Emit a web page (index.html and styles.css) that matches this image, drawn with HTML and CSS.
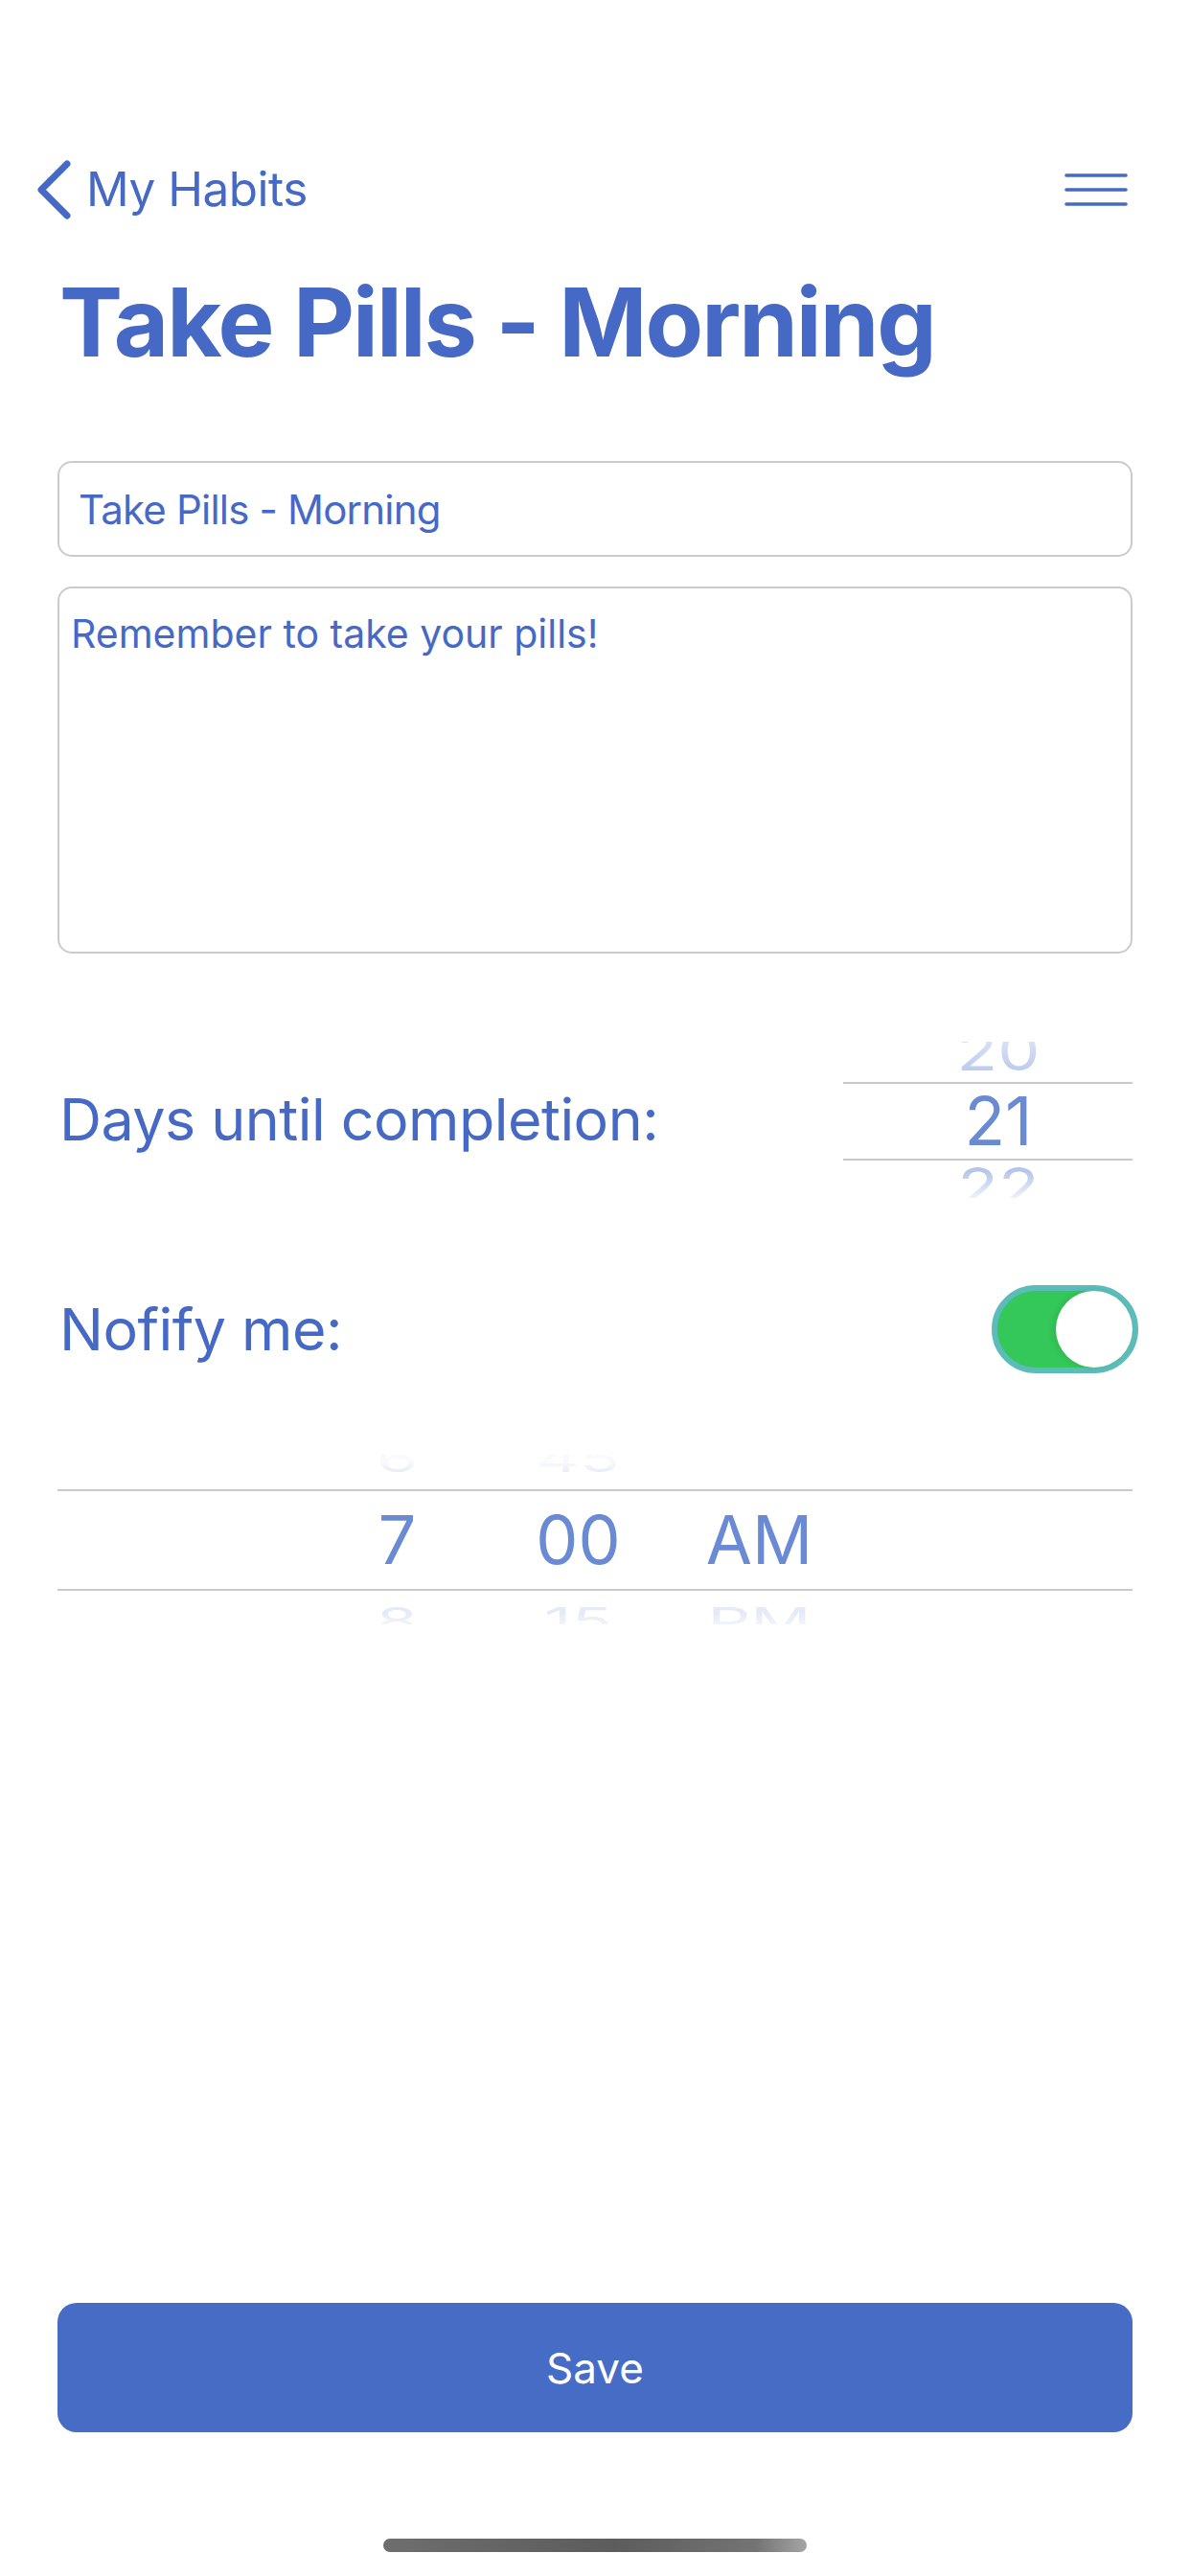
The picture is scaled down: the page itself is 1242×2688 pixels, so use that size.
FILE: index.html
```html
<!DOCTYPE html>
<html lang="en">
<head>
<meta charset="utf-8">
<title>Take Pills - Morning</title>
<link rel="stylesheet" href="styles.css">
</head>
<body>
<div class="screen">
  <header class="nav">
    <a class="back" href="#">
      <svg class="chev" viewBox="0 0 38 62" aria-hidden="true"><path d="M32 4 L5 31 L32 58" fill="none" stroke="#4669c6" stroke-width="7" stroke-linecap="round" stroke-linejoin="round"/></svg>
      <span>My Habits</span>
    </a>
    <svg class="menu" viewBox="0 0 66 34" aria-hidden="true"><g stroke="#4669c6" stroke-width="3.6" stroke-linecap="round"><line x1="2" y1="2" x2="64" y2="2"/><line x1="2" y1="17" x2="64" y2="17"/><line x1="2" y1="32" x2="64" y2="32"/></g></svg>
  </header>

  <h1 class="title">Take Pills - Morning</h1>

  <input class="field" type="text" value="Take Pills - Morning">
  <textarea class="note">Remember to take your pills!</textarea>

  <div class="row days">
    <span class="label">Days until completion:</span>
    <div class="wheel">
      <div class="wheel-prev"><span>20</span></div>
      <div class="wheel-sel"><span>21</span></div>
      <div class="wheel-next"><span>22</span></div>
    </div>
  </div>

  <div class="row notify">
    <span class="label">Nofify me:</span>
    <div class="switch"><div class="knob"></div></div>
  </div>

  <div class="timepicker">
    <div class="tp-row tp-prev"><span>6</span><span>45</span><span></span></div>
    <div class="tp-row tp-sel"><span>7</span><span>00</span><span>AM</span></div>
    <div class="tp-row tp-next"><span>8</span><span>15</span><span>PM</span></div>
  </div>

  <button class="save" type="button">Save</button>
  <div class="home-indicator"></div>
</div>
</body>
</html>
```

FILE: styles.css
```css
* { box-sizing: border-box; }
html, body { margin: 0; padding: 0; background: #ffffff; }
body {
  font-family: Inter, "Liberation Sans", "Noto Sans", sans-serif;
  color: #4669c6;
}
.screen {
  min-height: 2688px;
  display: flex;
  flex-direction: column;
  padding: 0 62px;
}

/* nav */
.nav {
  display: flex;
  align-items: center;
  justify-content: space-between;
  height: 62px;
  margin: 167px 3px 0 -24px;
}
.back {
  display: flex;
  align-items: center;
  gap: 14px;
  color: #4669c6;
  text-decoration: none;
}
.chev { width: 38px; height: 62px; display: block; }
.back span { font-size: 49.5px; line-height: 1; letter-spacing: -0.5px; }
.menu { width: 66px; height: 34px; display: block; }

/* title */
.title {
  margin: 47px 0 0;
  font-size: 99px;
  line-height: 120px;
  font-weight: 700;
  letter-spacing: -2px;
  color: #4669c6;
}

/* fields */
.field {
  display: block;
  height: 100px;
  margin: 85px -2px 0;
  border: 2px solid #cbcbcb;
  border-radius: 15px;
  padding: 0 20px;
  font-family: Inter, "Liberation Sans", sans-serif;
  font-size: 42px;
  letter-spacing: -0.8px;
  line-height: 1;
  color: #4669c6;
  background: #fff;
  outline: none;
}
.note {
  display: block;
  height: 383px;
  margin: 31px -2px 0;
  border: 2px solid #cbcbcb;
  border-radius: 15px;
  padding: 23px 12px;
  font-family: Inter, "Liberation Sans", sans-serif;
  font-size: 41px;
  line-height: 1.2;
  color: #4669c6;
  background: #fff;
  resize: none;
  outline: none;
  overflow: hidden;
}

/* rows */
.row {
  display: flex;
  justify-content: space-between;
  align-items: center;
}
.label { font-size: 61px; line-height: 1; letter-spacing: -0.55px; }
.days { margin-top: 92px; }
.notify { margin-top: 91px; }

/* number wheel */
.wheel { width: 302px; margin-right: -2px; display: flex; flex-direction: column; }
.wheel span { font-size: 70px; line-height: 1; display: block; }
.wheel-prev, .wheel-sel, .wheel-next {
  display: flex;
  justify-content: center;
  padding-left: 22px;
}
.wheel-prev { height: 42px; overflow: hidden; align-items: flex-end; }
.wheel-prev span {
  color: #b6c5eb;
  transform: scaleY(0.8);
  transform-origin: bottom;
  margin-bottom: 4px;
  -webkit-mask-image: linear-gradient(to bottom, rgba(0,0,0,0.3), #000);
  mask-image: linear-gradient(to bottom, rgba(0,0,0,0.3), #000);
}
.wheel-sel {
  height: 82px;
  align-items: center;
  border-top: 2px solid #c9c9c9;
  border-bottom: 2px solid #c9c9c9;
}
.wheel-sel span { color: #6a8ad4; }
.wheel-next { height: 39px; overflow: hidden; align-items: flex-start; }
.wheel-next span {
  color: #b6c5eb;
  transform: scaleY(0.8);
  transform-origin: top;
  -webkit-mask-image: linear-gradient(to bottom, #000 20%, rgba(0,0,0,0) 85%);
  mask-image: linear-gradient(to bottom, #000 20%, rgba(0,0,0,0) 85%);
}

/* switch */
.switch {
  width: 153px;
  height: 92px;
  border-radius: 46px;
  background: #34c759;
  border: 6px solid #5bbcb9;
  display: flex;
  align-items: center;
  justify-content: flex-end;
  margin-right: -8px;
}
.knob {
  width: 80px;
  height: 80px;
  border-radius: 50%;
  background: #ffffff;
  box-shadow: -3px 0 6px rgba(0, 0, 0, 0.08);
}

/* time picker */
.timepicker { margin: 85px -2px 0; }
.tp-row {
  display: grid;
  grid-template-columns: repeat(3, 189px);
  padding-left: 260px;
  overflow: hidden;
}
.tp-row span {
  text-align: center;
  font-size: 70px;
  line-height: 1;
  display: block;
}
.tp-prev { height: 36px; grid-template-rows: 36px; align-items: end; }
.tp-prev span {
  color: #dfe6f6;
  transform: scaleY(0.55);
  transform-origin: bottom;
  margin-bottom: 13px;
  -webkit-mask-image: linear-gradient(to bottom, rgba(0,0,0,0.2) 60%, #000);
  mask-image: linear-gradient(to bottom, rgba(0,0,0,0.2) 60%, #000);
}
.tp-sel {
  height: 106px;
  grid-template-rows: 102px;
  align-items: center;
  border-top: 2px solid #c9c9c9;
  border-bottom: 2px solid #c9c9c9;
}
.tp-sel span { color: #6a8ad4; }
.tp-next { height: 35px; grid-template-rows: 35px; align-items: start; }
.tp-next span {
  color: #e5eaf8;
  transform: scaleY(0.55);
  transform-origin: top;
  margin-top: 12px;
  -webkit-mask-image: linear-gradient(to bottom, #000 30%, rgba(0,0,0,0) 90%);
  mask-image: linear-gradient(to bottom, #000 30%, rgba(0,0,0,0) 90%);
}

/* save */
.save {
  margin: auto -2px 0;
  height: 135px;
  border: none;
  border-radius: 20px;
  background: #476cc6;
  color: #ffffff;
  font-family: Inter, "Liberation Sans", sans-serif;
  font-size: 44px;
  line-height: 1;
  display: flex;
  align-items: center;
  justify-content: center;
  padding: 0;
}

.home-indicator {
  width: 442px;
  height: 14px;
  margin: 111px auto 25px;
  border-radius: 7px;
  background: linear-gradient(90deg, #6e6e6e 0%, #5c5c5c 55%, #747474 88%, #a5a5a5 100%);
}
```
